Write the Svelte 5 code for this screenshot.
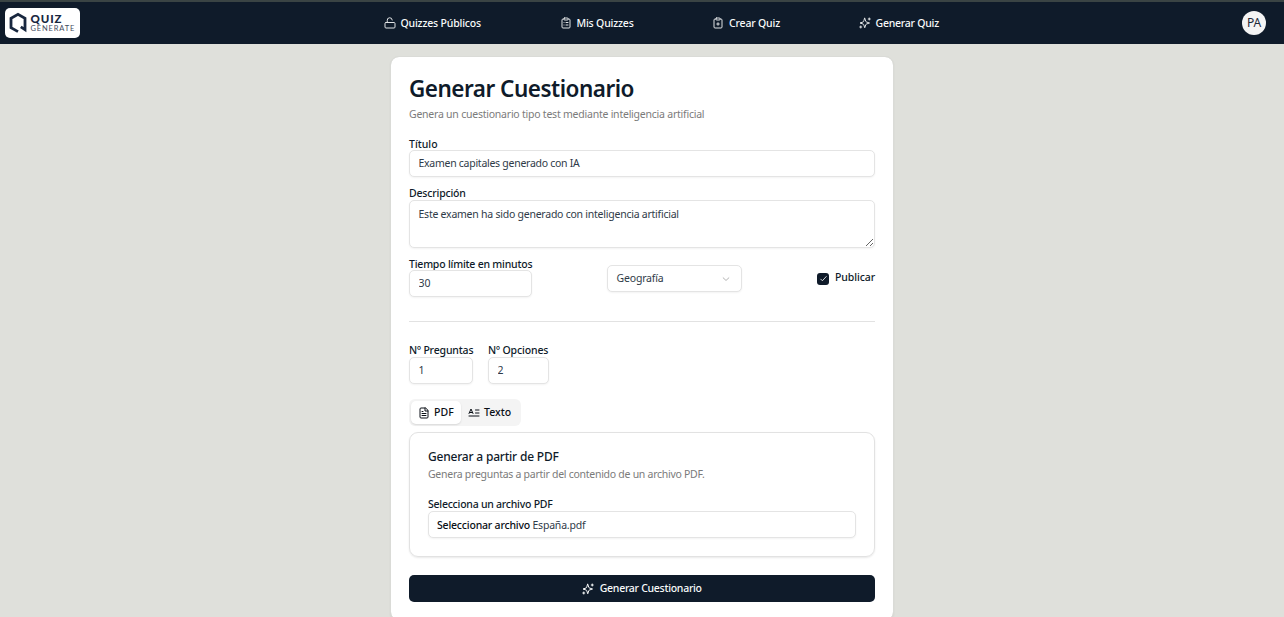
<script>
  let title = $state('Examen capitales generado con IA');
  let description = $state('Este examen ha sido generado con inteligencia artificial');
  let minutes = $state('30');
  let questions = $state('1');
  let options = $state('2');
  let tab = $state('pdf');
  let published = $state(true);
</script>

{#snippet sparkle()}
  <svg class="icon" viewBox="0 0 24 24">
    <path d="M11.500 2.500 13.500 8.500a2 2 0 0 0 1.500 1.500L21 12l-6 2a2 2 0 0 0-1.500 1.500L11.500 21.500l-2-6a2 2 0 0 0-1.500-1.500L2 12l6-2a2 2 0 0 0 1.500-1.500z" />
    <path d="M20.500 2v4M18.500 4h4M3.500 18v4M1.500 20h4" />
  </svg>
{/snippet}

<div class="page">
  <header>
    <div class="logo">
      <svg class="mark" viewBox="0 0 18 22">
        <path d="M9 19.600 2 15.600V6.400L9 2.300l7 4.100v11.200L11.800 14.800" />
      </svg>
      <div class="brand"><b>QUIZ</b><span>GENERATE</span></div>
    </div>
    <nav>
      <a class="n1" href="#publicos">
        <svg class="icon" viewBox="0 0 24 24"><rect x="2" y="11" width="20" height="11" rx="2" /><path d="M6.500 11V7a5 5 0 0 1 10-1" /></svg>
        <span>Quizzes Públicos</span>
      </a>
      <a class="n2" href="#mis">
        <svg class="icon" viewBox="0 0 24 24"><rect x="8" y="2" width="8" height="4" rx="1" /><path d="M16 4h2a2 2 0 0 1 2 2v14a2 2 0 0 1-2 2H6a2 2 0 0 1-2-2V6a2 2 0 0 1 2-2h2M12 11h4M12 16h4M8 11h.01M8 16h.01" /></svg>
        <span>Mis Quizzes</span>
      </a>
      <a class="n3" href="#crear">
        <svg class="icon" viewBox="0 0 24 24"><rect x="8" y="2" width="8" height="4" rx="1" /><path d="M16 4h2a2 2 0 0 1 2 2v14a2 2 0 0 1-2 2H6a2 2 0 0 1-2-2V6a2 2 0 0 1 2-2h2M9.500 14h5M12 11.500v5" /></svg>
        <span>Crear Quiz</span>
      </a>
      <a class="n4" href="#generar">{@render sparkle()}<span>Generar Quiz</span></a>
    </nav>
    <div class="avatar">PA</div>
  </header>

  <main>
    <h1>Generar Cuestionario</h1>
    <p class="sub">Genera un cuestionario tipo test mediante inteligencia artificial</p>

    <label class="field"><span class="l-title">Título</span><input class="v-title" bind:value={title} /></label>
    <label class="field"><span>Descripción</span><textarea bind:value={description}></textarea></label>

    <div class="row">
      <label class="field time"><span>Tiempo límite en minutos</span><input bind:value={minutes} /></label>
      <button class="select" type="button">
        <span>Geografía</span>
        <svg viewBox="0 0 24 24"><path d="m4.500 8.500 7.500 7 7.500-7" /></svg>
      </button>
      <div class="check">
        <button class="box" type="button" aria-label="Publicar" onclick={() => (published = !published)}>
          {#if published}<svg viewBox="0 0 24 24"><path d="m4 13 5 5L20 6" /></svg>{/if}
        </button>
        <span>Publicar</span>
      </div>
    </div>

    <hr />

    <div class="counts">
      <label class="field q"><span>Nº Preguntas</span><input bind:value={questions} /></label>
      <label class="field o"><span>Nº Opciones</span><input bind:value={options} /></label>
    </div>

    <div class="tabs">
      <button class="tab" class:active={tab === 'pdf'} onclick={() => (tab = 'pdf')}>
        <svg class="icon" viewBox="0 0 24 24"><path d="M14.500 2H6a2 2 0 0 0-2 2v16a2 2 0 0 0 2 2h12a2 2 0 0 0 2-2V7.500zM14 2v6h6M8 9h2M8 13h8M8 17h8" /></svg>
        <span class="t-pdf">PDF</span>
      </button>
      <button class="tab" class:active={tab === 'text'} onclick={() => (tab = 'text')}>
        <svg class="icon" viewBox="0 0 24 24"><path d="M2 13 6 4l4 9M4 11h4M15 6h7M15 12h7M2 18h20" /></svg>
        <span>Texto</span>
      </button>
    </div>

    <section>
      <h2>Generar a partir de PDF</h2>
      <p>Genera preguntas a partir del contenido de un archivo PDF.</p>
      <div class="field">
        <span class="l-file">Selecciona un archivo PDF</span>
        <div class="file"><b>Seleccionar archivo</b><span>España.pdf</span></div>
      </div>
    </section>

    <button class="submit" type="button">{@render sparkle()}<span>Generar Cuestionario</span></button>
  </main>
</div>

<style>
  :global(body) {
    margin: 0;
    overflow: hidden;
  }
  .page {
    height: 617px;
    overflow: hidden;
    background: #dfe0db;
    color: #0f1b2a;
    font: 400 10.5px/15px 'Noto Sans', sans-serif;
    letter-spacing: -0.18px;
  }
  .page * {
    box-sizing: border-box;
  }
  header {
    height: 44px;
    padding: 0 18px 0 5px;
    border-top: 2px solid #3a4444;
    background: #0f1b2a;
    display: flex;
    align-items: center;
    justify-content: space-between;
  }
  .logo {
    width: 75px;
    height: 30px;
    padding-left: 4px;
    border-radius: 5px;
    background: #fff;
    display: flex;
    align-items: center;
    gap: 3.500px;
  }
  .mark {
    width: 18px;
    height: 22px;
    flex: none;
    fill: none;
    stroke: #18273f;
    stroke-width: 2.800;
  }
  .brand {
    display: flex;
    flex-direction: column;
    color: #18273f;
  }
  .brand b {
    font: 900 11.500px/10px Lato, sans-serif;
    letter-spacing: 0.9px;
  }
  .brand span {
    font: 400 7.500px/9px Lato, sans-serif;
    letter-spacing: 0.850px;
    color: #3f4c60;
  }
  nav {
    padding-left: 1px;
    display: flex;
    gap: 78.500px;
  }
  a {
    display: flex;
    align-items: center;
    gap: 5px;
    color: #f8fafa;
    font-weight: 500;
    text-decoration: none;
  }
  a .icon {
    opacity: 0.9;
  }
  .n1 { width: 97.500px; }
  .n2 { width: 74px; }
  .n3 { width: 68px; }
  .n4 { width: 81px; letter-spacing: -0.24px; }
  a span {
    white-space: nowrap;
  }
  .icon {
    width: 12px;
    height: 12px;
    flex: none;
    fill: none;
    stroke: currentColor;
    stroke-width: 2;
    stroke-linecap: round;
    stroke-linejoin: round;
  }
  .avatar {
    width: 24px;
    height: 24px;
    border-radius: 50%;
    background: #f4f4f4;
    color: #1d2938;
    font-size: 12px;
    line-height: 24px;
    text-align: center;
  }
  main {
    width: 504px;
    height: 565px;
    margin: 12px auto 0;
    padding: 18px;
    border: 1px solid #dadbd7;
    border-radius: 9px;
    background: #fff;
    background-clip: padding-box;
    box-shadow: 0 1px 2px rgb(0 0 0 / 6%);
  }
  h1 {
    height: 28px;
    margin: 0;
    font: 600 22.5px/28px 'Noto Sans', sans-serif;
    letter-spacing: -0.5px;
  }
  p {
    margin: 0;
    color: #7b7b7b;
    white-space: nowrap;
  }
  .sub {
    margin-top: 4px;
    letter-spacing: -0.23px;
  }
  .field {
    display: flex;
    flex-direction: column;
  }
  .field > span {
    height: 14px;
    line-height: 15px;
    font-weight: 500;
    white-space: nowrap;
  }
  main > .field {
    margin-top: 14px;
  }
  main > .field + .field {
    margin-top: 9px;
  }
  .field .l-title {
    line-height: 17px;
    letter-spacing: 0;
  }
  input,
  textarea,
  .select,
  .file {
    width: 100%;
    height: 27px;
    margin: 0;
    padding: 0 8.500px 2px;
    border: 1px solid #e4e4e4;
    border-radius: 5px;
    outline: none;
    background: #fff;
    box-shadow: 0 1px 2px rgb(0 0 0 / 5%);
    color: #2f3b48;
    font: inherit;
    letter-spacing: 0;
  }
  .v-title {
    letter-spacing: -0.27px;
  }
  textarea {
    height: 48px;
    padding: 6px 8.500px;
    letter-spacing: -0.24px;
    resize: vertical;
  }
  .row {
    height: 33px;
    margin-top: 9px;
    display: flex;
    align-items: flex-start;
    justify-content: space-between;
  }
  .time {
    width: 123px;
    margin-top: -1px;
  }
  .time > span {
    line-height: 17px;
    letter-spacing: -0.21px;
  }
  .select {
    width: 135px;
    margin-top: 8px;
    padding-bottom: 0;
    display: flex;
    align-items: center;
    justify-content: space-between;
    letter-spacing: -0.18px;
  }
  .select svg {
    width: 10px;
    height: 10px;
    margin-right: 1.500px;
    fill: none;
    stroke: #b4b4b4;
    stroke-width: 2.400;
  }
  .check {
    height: 16px;
    margin-top: 12px;
    display: flex;
    align-items: center;
    gap: 6px;
    font-weight: 500;
    letter-spacing: -0.1px;
  }
  .box {
    width: 12px;
    height: 12px;
    margin-top: 3px;
    padding: 1px;
    border: 0;
    border-radius: 3px;
    background: #0f1b2a;
    display: grid;
    place-items: center;
  }
  .box svg {
    width: 9px;
    height: 9px;
    fill: none;
    stroke: #fff;
    stroke-width: 2.200;
  }
  hr {
    height: 1px;
    margin: 31px 0 21px;
    border: 0;
    background: #e2e2e2;
  }
  .counts {
    display: flex;
    gap: 15px;
  }
  .q { width: 64px; letter-spacing: -0.16px; }
  .o { width: 61px; letter-spacing: -0.13px; }
  .tabs {
    width: 112px;
    height: 27px;
    margin-top: 15px;
    padding: 2px;
    border-radius: 6px;
    background: #f4f4f4;
    display: flex;
  }
  .tab {
    height: 23px;
    padding: 0 0 0 7px;
    border: 0;
    border-radius: 5px;
    background: none;
    display: flex;
    align-items: center;
    gap: 4px;
    color: #0a0f16;
    font: inherit;
    font-weight: 500;
    letter-spacing: 0;
  }
  .tab.active {
    width: 50px;
    background: #fff;
    box-shadow: 0 1px 2px rgb(0 0 0 / 12%);
  }
  .t-pdf {
    letter-spacing: 0.1px;
  }
  section {
    height: 125px;
    margin-top: 6px;
    padding: 15px 18px 0;
    border: 1px solid #e2e2e2;
    border-radius: 9px;
    box-shadow: 0 1px 2px rgb(0 0 0 / 9%);
  }
  h2 {
    margin: 0 0 2px;
    font: 500 12px/17px 'Noto Sans', sans-serif;
    letter-spacing: -0.2px;
  }
  section p {
    letter-spacing: -0.27px;
  }
  section .field {
    margin-top: 15px;
  }
  .field .l-file {
    letter-spacing: -0.24px;
  }
  .file {
    padding: 1px 8px 0;
    display: flex;
    align-items: center;
    gap: 2.500px;
    letter-spacing: -0.2px;
  }
  .file b {
    color: #0a0f16;
    font-weight: 500;
  }
  .submit {
    width: 100%;
    height: 27px;
    margin-top: 18px;
    border: 0;
    border-radius: 5px;
    background: #0f1b2a;
    color: #f8fafa;
    display: flex;
    align-items: center;
    justify-content: center;
    gap: 5.500px;
    font: inherit;
    font-weight: 500;
    letter-spacing: -0.28px;
  }
</style>
